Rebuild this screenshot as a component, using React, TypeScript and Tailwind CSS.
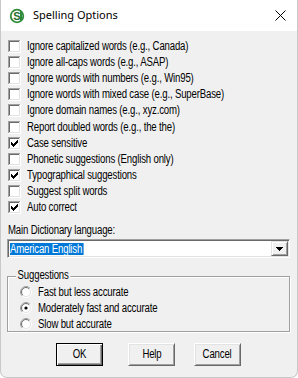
import React from "react";

const font = { fontFamily: '"Liberation Sans", Arial, sans-serif' };

function T({ children, className = "" }: { children: React.ReactNode; className?: string }) {
  return (
    <span className={"inline-block whitespace-nowrap origin-left scale-x-[0.8] tracking-[-0.2px] " + className}>
      {children}
    </span>
  );
}

function CheckBox({ checked }: { checked: boolean }) {
  const cols: [number, number][] = [
    [3, 5],
    [4, 6],
    [5, 7],
    [6, 6],
    [7, 5],
    [8, 4],
    [9, 3],
  ];
  return (
    <svg width="13" height="13" viewBox="0 0 13 13" className="shrink-0" shapeRendering="crispEdges">
      <rect x="0" y="0" width="13" height="13" fill="#fff" />
      <rect x="0" y="0" width="12" height="1" fill="#a0a0a0" />
      <rect x="0" y="0" width="1" height="12" fill="#a0a0a0" />
      <rect x="1" y="1" width="10" height="1" fill="#696969" />
      <rect x="1" y="1" width="1" height="10" fill="#696969" />
      <rect x="1" y="11" width="11" height="1" fill="#e3e3e3" />
      <rect x="11" y="1" width="1" height="11" fill="#e3e3e3" />
      {checked &&
        cols.map(([x, y]) => <rect key={x} x={x} y={y} width="1" height="3" fill="#000" />)}
    </svg>
  );
}

function Radio({ checked }: { checked: boolean }) {
  const c = 6;
  const arc = (r: number, color: string, topLeft: boolean) => {
    const d = r * Math.SQRT1_2;
    const bl = `${c - d} ${c + d}`;
    const tr = `${c + d} ${c - d}`;
    return (
      <path
        d={topLeft ? `M ${bl} A ${r} ${r} 0 0 1 ${tr}` : `M ${tr} A ${r} ${r} 0 0 1 ${bl}`}
        stroke={color}
        strokeWidth="1"
        fill="none"
      />
    );
  };
  return (
    <svg width="12" height="12" viewBox="0 0 12 12" className="shrink-0">
      <circle cx="6" cy="6" r="5" fill="#fff" />
      {arc(5.5, "#a0a0a0", true)}
      {arc(5.5, "#ffffff", false)}
      {arc(4.5, "#696969", true)}
      {arc(4.5, "#e3e3e3", false)}
      {checked && <circle cx="6" cy="6" r="1.6" fill="#000" />}
    </svg>
  );
}

const checks: [string, boolean][] = [
  ["Ignore capitalized words (e.g., Canada)", false],
  ["Ignore all-caps words (e.g., ASAP)", false],
  ["Ignore words with numbers (e.g., Win95)", false],
  ["Ignore words with mixed case (e.g., SuperBase)", false],
  ["Ignore domain names (e.g., xyz.com)", false],
  ["Report doubled words (e.g., the the)", false],
  ["Case sensitive", true],
  ["Phonetic suggestions (English only)", false],
  ["Typographical suggestions", true],
  ["Suggest split words", false],
  ["Auto correct", true],
];

const radios: [string, boolean][] = [
  ["Fast but less accurate", false],
  ["Moderately fast and accurate", true],
  ["Slow but accurate", false],
];

function Btn({ label, def }: { label: string; def?: boolean }) {
  return (
    <div
      className={
        "w-[47px] h-[23px] flex items-center justify-center bg-[#f0f0f0] text-[12px] text-black " +
        (def
          ? "border border-black shadow-[inset_1px_1px_0_#fff,inset_-1px_-1px_0_#696969,inset_-2px_-2px_0_#a0a0a0]"
          : "border border-t-white border-l-white border-r-[#696969] border-b-[#696969] shadow-[inset_1px_1px_0_#e3e3e3,inset_-1px_-1px_0_#a0a0a0]")
      }
    >
      <span className="inline-block scale-x-[0.8] tracking-[-0.2px]">{label}</span>
    </div>
  );
}

export default function App() {
  return (
    <div
      className="w-[298px] h-[378px] flex flex-col bg-[#f0f0f0] overflow-hidden rounded-b-[7px] border-b border-l border-r border-[#c9c9c9]"
      style={font}
    >
      {/* Title bar */}
      <div className="h-[31px] bg-white flex items-center shrink-0">
        <svg width="16" height="16" viewBox="0 0 16 16" className="ml-[8px]">
          <circle cx="8" cy="8" r="7.2" fill="#2f8a3c" />
          <circle cx="8" cy="8" r="5.4" fill="#fff" />
          <text x="8" y="12" textAnchor="middle" fontSize="11" fontWeight="bold" fill="#1f6e2c" fontFamily="Liberation Sans, Arial, sans-serif">
            S
          </text>
          <rect x="11" y="3" width="2" height="10" fill="#2f8a3c" />
        </svg>
        <span className="ml-[8px] text-[11px] text-black" style={{ fontFamily: '"Noto Sans", sans-serif' }}>
          Spelling Options
        </span>
        <svg width="11" height="11" viewBox="0 0 11 11" className="ml-auto mr-[11px]">
          <path d="M0.5 0.5 L10.5 10.5 M10.5 0.5 L0.5 10.5" stroke="#000" strokeWidth="1" />
        </svg>
      </div>

      {/* Body */}
      <div className="flex flex-col pt-[7px] pl-[6px] text-[12px] leading-[13px] text-black">
        <div className="flex flex-col pl-[1px]">
          {checks.map(([t, c]) => (
            <div key={t} className="h-[16.2px] flex items-center gap-[6px] whitespace-nowrap">
              <CheckBox checked={c} />
              <T>{t}</T>
            </div>
          ))}
        </div>

        <div className="mt-[8px] pl-[1px]">
          <T>Main Dictionary language:</T>
        </div>

        <div className="mt-[2px] w-[283px] h-[19px] bg-white flex items-center border border-t-[#a0a0a0] border-l-[#a0a0a0] border-r-white border-b-white shadow-[inset_1px_1px_0_#696969,inset_-1px_-1px_0_#e3e3e3]">
          <T className="ml-[2px] bg-[#0078d7] text-white h-[12px] leading-[12px] pr-[2px]">American English</T>
          <div className="ml-auto mr-[1px] w-[17px] h-[15px] bg-[#f0f0f0] flex items-center justify-center border border-t-[#e3e3e3] border-l-[#e3e3e3] border-r-[#696969] border-b-[#696969] shadow-[inset_1px_1px_0_#fff,inset_-1px_-1px_0_#a0a0a0]">
            <svg width="7" height="4" viewBox="0 0 7 4" shapeRendering="crispEdges">
              <rect x="0" y="0" width="7" height="1" fill="#000" />
              <rect x="1" y="1" width="5" height="1" fill="#000" />
              <rect x="2" y="2" width="3" height="1" fill="#000" />
              <rect x="3" y="3" width="1" height="1" fill="#000" />
            </svg>
          </div>
        </div>

        <div className="relative mt-[18px] w-[283px] h-[56px] border border-[#a0a0a0] shadow-[inset_1px_1px_0_#fff,1px_1px_0_#fff] pt-[7px] pl-[12px]">
          <T className="absolute -top-[8px] left-[8px] px-[2px] bg-[#f0f0f0]">Suggestions</T>
          {radios.map(([t, c]) => (
            <div key={t} className="h-[16px] flex items-center gap-[6px] whitespace-nowrap">
              <Radio checked={c} />
              <T>{t}</T>
            </div>
          ))}
        </div>

        <div className="mt-[11px] flex pl-[49px]">
          <Btn label="OK" def />
          <div className="ml-[25px]">
            <Btn label="Help" />
          </div>
          <div className="ml-[19px]">
            <Btn label="Cancel" />
          </div>
        </div>
      </div>
    </div>
  );
}
